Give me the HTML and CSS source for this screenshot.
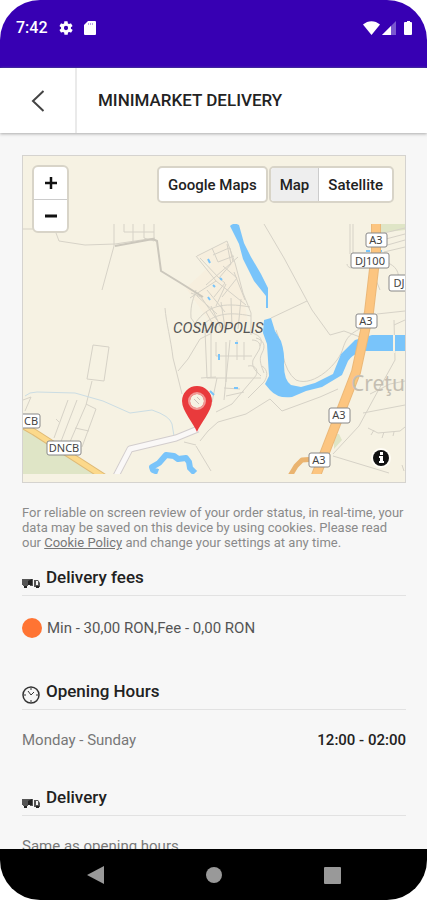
FILE: index.html
```html
<!DOCTYPE html>
<html lang="en">
  <head>
    <meta charset="UTF-8" />
    <meta name="viewport" content="width=device-width, initial-scale=1.0" />
    <title>Minimarket Delivery</title>
    <link rel="stylesheet" href="styles.css">
  </head>
  <body>
    <div class="phone">
      <div class="status">
        <span class="time">7:42</span>
        <svg width="16" height="16" viewBox="0 0 24 24">
          <path fill="#fff" fill-rule="evenodd" d="M19.4 13a7.500 7.500 0 0 0 0-2l2.100-1.600a.5.5 0 0 0 .1-.6l-2-3.500a.5.5 0 0 0-.6-.2l-2.500 1a7.300 7.300 0 0 0-1.700-1L14.400 2.400a.5.5 0 0 0-.5-.4h-4a.5.5 0 0 0-.5.400L9.100 5.100a7.700 7.700 0 0 0-1.700 1L5 5.100a.5.5 0 0 0-.6.2l-2 3.500a.5.5 0 0 0 .1.600L4.600 11a8 8 0 0 0 0 2l-2.100 1.600a.5.5 0 0 0-.1.600l2 3.500c.1.200.4.300.6.200l2.500-1a7.300 7.300 0 0 0 1.700 1l.4 2.700c0 .2.200.4.500.4h4c.3 0 .5-.2.500-.4l.4-2.700a7.700 7.700 0 0 0 1.700-1l2.500 1c.2.100.5 0 .6-.2l2-3.500a.5.500 0 0 0-.1-.6zM12 15.200a3.200 3.200 0 1 1 0-6.400 3.200 3.200 0 0 1 0 6.400z" />
        </svg>
        <svg width="12" height="14" viewBox="0 0 12 14">
          <path fill="#fff" d="M4 0h7a1 1 0 0 1 1 1v12a1 1 0 0 1-1 1H1a1 1 0 0 1-1-1V4z" />
          <path stroke="#b9a5ea" d="M4.500 2v2M6.500 2v2M8.500 2v2" />
        </svg>
        <svg class="signals" width="50" height="14" viewBox="0 0 50 14">
          <path fill="#fff" d="M0 3.500C5-1 12-1 17 3.500L8.500 14z" />
          <path fill="#7a57d0" d="M33 0v14H19z" />
          <path fill="#fff" d="M28 5v9h-9z" />
          <path fill="#fff" d="M42 1h2V0h3v1h1a1 1 0 0 1 1 1v11a1 1 0 0 1-1 1h-6a1 1 0 0 1-1-1V2a1 1 0 0 1 1-1z" />
        </svg>
      </div>

      <header class="topbar">
        <button class="back" type="button" aria-label="Back">
          <svg width="14" height="22" viewBox="0 0 14 22">
            <path fill="none" stroke="#444" stroke-width="2" d="M12.500 1 2 11l10.500 10" />
          </svg>
        </button>
        <h1>MINIMARKET DELIVERY</h1>
      </header>

      <main>
        <section class="map">
          <svg class="tiles" viewBox="23 156 382 326" role="img" aria-label="Delivery area map">
            <rect x="23" y="156" width="382" height="326" fill="#f6f2e3" />
            <svg x="23" y="224" width="382" height="250" viewBox="23 224 382 250">
              <!-- green areas -->
              <path fill="#dfe5c6" d="M23 429 40 436 62 453 100 474H23zM378 224h27v6l-27 3zM334 434l5 0 3 6-8 9z" />
              <!-- built up area -->
              <path fill="#f8ecdb" d="M197 256l30-15 8 22 8 30 5 30-30 10-18-25-14-20 26-24z" opacity=".6" />

              <!-- minor roads -->
              <g fill="none" stroke="#d6d2c7" stroke-width="1">
                <path d="M23 229h13M56 233l3 8 26 4 30-1 40-6" />
                <path d="M114 224v22l-12 44M124 224v8h30M133 224v18M144 224v14l10 3V224M165 308c1 14 6 32 8 50l9 36" />
                <path d="M264 224l20 34 28 52 18 25 14-4 16 6M271 318l36-17M350 224v30M353 224v30" />
                <path d="M93 345l16 2-5 34-17-2zM92 381l-6 24-20 46M68 400l-14 38M77 400l-17 44M86 404l10 5-14 38M75 428l14 3M56 419l3 3M23 400l8-3-6 14" />
                <path d="M196 290c-2 8-6 14-5 28l10 14M196 256l20 25-26 17M191 293l10 4 16 23" />
                <path d="M197 256l30-15 8 22 8 30 8 20v22M200 258l19 20 12-14-4-20M212 248l6 14 16-6M206 285l32-28M216 281l30 24M207 290l18 22M219 278l6 5-11 14M197 296l20 18M223 266l14 12-15 19M230 248l3 14M213 255l16-7" />
                <path d="M196 322c12-16 26-20 54-15M203 325c10-10 24-14 48-9M211 306l10 22M221 302l4 26M231 298l1 30M241 299l-3 30M206 312l9 16M226 284l-10 22M234 272l11 28" />
                <path d="M205 330l2 48M211 331v46M226 342v40M230 340l-6 60M216 356h36M207 378h54M216 342v14M237 340v20M244 342v18M201 378l15-1M178 371l10-12 12-20 12-6" />
                <path d="M252 340c6 0 10 4 7 10l-6 10c-2 8 4 12 8 16M256 338c8 2 10 8 6 15s0 14 2 20M248 332c10 2 16 6 12 14M217 378l-5 24M224 388l16 1M226 396l18-4M262 366c6 4 6 10 2 16l-16 16M248 366c8-2 12 6 6 12l-22 26-16 8" />
                <path d="M196 446l15 25M200 441l8-10 10-9 28-8 24-15 12 12 38-14 18-8M184 442l12 3" />
                <path d="M276 330c6 14 6 40 20 50 18 8 44-18 47-32 4-12 8-16 28-24M394 320l1 40-22 40-14 26-26 28M333 456l56 17M394 325l11-5" />
                <path d="M370 394l20-10 15-3M363 413l42-8M368 428l10 5 22-2 5-4M374 430l-3 5M384 432l-2 6M394 432l-1 4M402 465l2 6" />
                <path d="M380 234l25-6M382 240l23-6M384 246l21-6M384 252l21-5M386 262c10 4 14 10 12 20M376 280l4 10M377 314l28-3M352 268c-3 0-5-2-5-4" />
              </g>
              <path fill="none" stroke="#cbc7bc" stroke-width="2" d="M115 246l38-7 4 2 4 30 18 11 24 15" />

              <!-- water -->
              <path fill="none" stroke="#cbdde4" stroke-width="1" d="M25 396q4-4 12-4l38 1 28 8 27 12 22-3q18 6 20 14l2 12" />
              <path fill="#79c4fa" d="M230 226q4-4 9-1l5 18 7 14 10 17 7 14v20h-2v-12l-12-15-11-22-4-15z" />
              <path fill="#79c4fa" d="M264 320l7-2 4 13 6 10q4 12 3 24 0 15 7 20l10 2 14-4 18-9 8-20 14-14 17-5h33v16h-43q-10 4-14 10l-6 14-20 12-16 4-14 6q-14 2-22-7l-5-6 4-8-2-32-4-11z" />
              <path stroke="#f6f2e3" stroke-width="2" d="M394 335v18" />
              <path fill="none" stroke="#79c4fa" stroke-width="6" stroke-linejoin="round" d="M158 472l-5-2-1-3 7-4 7-8 8 1 4 3 8-1 3 4 1 6 5 5" />
              <path fill="none" stroke="#79c4fa" stroke-width="2" d="M208 259l2 4M220 278l2 2M213 285l2 2M208 297l2 3M219 354v6M235 343h3M234 388h4M269 370h3M210 391l4 4M366 251h4M378 251h4" />

              <!-- main roads -->
              <path fill="none" stroke="#d2cdcd" stroke-width="7" stroke-linejoin="round" d="M116 476l14-27 46-11 22-9" />
              <path fill="none" stroke="#faf8f7" stroke-width="5" stroke-linejoin="round" d="M116 476l14-27 46-11 22-9" />
              <path fill="none" stroke="#dfba76" stroke-width="7" d="M20 424l14 8 70 45" />
              <path fill="none" stroke="#fcd98b" stroke-width="5" d="M20 424l14 8 70 45" />
              <path fill="none" stroke="#eab470" stroke-width="5" stroke-linejoin="round" d="M290 476l6-10 6-6 14-1" />
              <path fill="none" stroke="#ebb878" stroke-width="10" d="M376 220v32l-7 60-13 60-17 44-24 62" />
              <path fill="none" stroke="#fcc580" stroke-width="8" d="M376 220v32l-7 60-13 60-17 44-24 62" />

              <text class="town" x="351" y="391">Creţu</text>
              <text class="district" x="173" y="333">COSMOPOLIS</text>

              <!-- road signs -->
              <g class="sign">
                <rect x="366" y="233" width="21" height="14" rx="2" /><text x="376" y="244">A3</text>
                <rect x="351" y="253" width="38" height="15" rx="2" /><text x="370" y="265">DJ100</text>
                <rect x="389" y="275" width="38" height="16" rx="2" /><text x="399" y="287">DJ</text>
                <rect x="356" y="314" width="21" height="14" rx="2" /><text x="366" y="325">A3</text>
                <rect x="329" y="408" width="21" height="15" rx="2" /><text x="339" y="419">A3</text>
                <rect x="309" y="453" width="21" height="14" rx="2" /><text x="319" y="464">A3</text>
                <rect x="13" y="414" width="27" height="14" rx="2" /><text x="31" y="425">CB</text>
                <rect x="47" y="441" width="34" height="14" rx="2" /><text x="64" y="452">DNCB</text>
              </g>
            </svg>

            <!-- shop pin -->
            <path fill="#e93a3c" fill-rule="evenodd" d="M197 432c-3-8-15-21-15-31a15 15 0 0 1 30 0c0 10-12 23-15 31zM197 394a7 7 0 1 0 0 14 7 7 0 0 0 0-14z" />
            <circle cx="197" cy="401" r="8" fill="none" stroke="#f19a96" stroke-width="2" />
            <path stroke="#c9c0ba" d="M194 399l5 5M197 397l3 3" />

            <circle cx="381" cy="458" r="10" fill="#fffdf6" />
            <circle cx="381" cy="458" r="8" fill="#111" />
            <path fill="#fff" d="M380 452h3v3h-3zM379 456h4v5h1v2h-5v-2h1v-3h-1z" />
          </svg>

          <div class="zoom">
            <button type="button" aria-label="Zoom in">
              <svg width="12" height="12" viewBox="0 0 12 12"><path stroke="#111" stroke-width="2.500" d="M0 6h12M6 0v12" /></svg>
            </button>
            <button type="button" aria-label="Zoom out">
              <svg width="12" height="12" viewBox="0 0 12 12"><path stroke="#111" stroke-width="3" d="M0 6h12" /></svg>
            </button>
          </div>
          <div class="layers">
            <button class="google" type="button">Google Maps</button>
            <div class="switch">
              <button class="active" type="button">Map</button>
              <button type="button">Satellite</button>
            </div>
          </div>
        </section>

        <p class="notice">
          For reliable on screen review of your order status, in real-time, your
          data may be saved on this device by using cookies. Please read
          our&nbsp;<a href="#">Cookie Policy</a> and change your settings at any time.
        </p>

        <section class="info fees">
          <h2>
            <svg width="18" height="18" viewBox="0 0 18 18">
              <path fill="#555" d="M0 7h11v7H0zM12 8h4l2 3v4h-6z" />
              <path fill="#f7f7f7" d="M14 9h2v4h-2zM0 13h1v1H0zM6 14h2v-1H6z" />
              <path fill="#222" d="M2 14h3v2H2zM14 14h3v2h-3zM6 9l4-2v6H6z" />
            </svg>
            Delivery fees
          </h2>
          <p class="fee"><span class="dot"></span>Min - 30,00 RON,Fee - 0,00 RON</p>
        </section>

        <section class="info">
          <h2>
            <svg width="18" height="18" viewBox="0 0 18 18">
              <circle cx="9" cy="9" r="8" fill="none" stroke="#333" stroke-width="1.500" />
              <path fill="none" stroke="#333" d="M6 5l3 4 3-3M9 2v2M9 14v2M2 9h2M14 9h2" />
            </svg>
            Opening Hours
          </h2>
          <p class="row"><span>Monday - Sunday</span><b>12:00 - 02:00</b></p>
        </section>

        <section class="info">
          <h2>
            <svg width="18" height="18" viewBox="0 0 18 18">
              <path fill="#555" d="M0 7h11v7H0zM12 8h4l2 3v4h-6z" />
              <path fill="#f7f7f7" d="M14 9h2v4h-2zM0 13h1v1H0zM6 14h2v-1H6z" />
              <path fill="#222" d="M2 14h3v2H2zM14 14h3v2h-3zM6 9l4-2v6H6z" />
            </svg>
            Delivery
          </h2>
          <p class="row"><span>Same as opening hours</span></p>
        </section>
      </main>

      <nav class="keys">
        <button type="button" aria-label="Back">
          <svg width="18" height="18" viewBox="0 0 18 18"><path fill="#999" d="M17 0v18L0 9z" /></svg>
        </button>
        <button type="button" aria-label="Home">
          <svg width="18" height="18" viewBox="0 0 18 18"><circle cx="9" cy="9" r="8" fill="#999" /></svg>
        </button>
        <button type="button" aria-label="Recent apps">
          <svg width="18" height="18" viewBox="0 0 18 18"><rect x="1" y="1" width="17" height="17" rx="1" fill="#999" /></svg>
        </button>
      </nav>
    </div>
  </body>
</html>
```
FILE: styles.css
```css
* {
  box-sizing: border-box;
}
body {
  margin: 0;
  background-color: #fff;
  font-family: Roboto, sans-serif;
  color: #222;
}
h1,
h2,
p {
  margin: 0;
}
button {
  border: none;
  padding: 0;
  background-color: transparent;
  font-family: inherit;
  color: inherit;
}
svg {
  display: block;
  flex: none;
}
.phone {
  display: flex;
  flex-direction: column;
  height: 100vh;
  border-radius: 40px;
  background-color: #f7f7f7;
  overflow: hidden;
}

.status {
  display: flex;
  align-items: center;
  gap: 10px;
  height: 68px;
  padding: 0 14px 12px 16px;
  background-color: #3700b3;
  border-bottom: 1px solid #2a0a9c;
  flex: none;
}
.time {
  font-size: 16px;
  font-weight: 500;
  color: #fff;
}
.signals {
  margin-left: auto;
}

.topbar {
  display: flex;
  align-items: center;
  height: 65px;
  background-color: #fff;
  box-shadow: 0 1px 3px #aaa;
  flex: none;
}
.back {
  display: flex;
  align-items: center;
  justify-content: center;
  width: 77px;
  height: 100%;
  border-right: 2px solid #eaeaea;
}
h1 {
  padding: 0 0 2px 21px;
  font-size: 17px;
  font-weight: 500;
}

main {
  flex: 1;
  min-height: 0;
  padding: 22px 21px 0 22px;
  overflow: hidden;
}
.map {
  position: relative;
  border: 1px solid #d5d3cf;
}
.tiles {
  width: 100%;
}
.district {
  font-size: 15px;
  font-style: italic;
  fill: #555;
}
.town {
  font-family: "Noto Sans", sans-serif;
  font-size: 21px;
  fill: #c4beb2;
}
.sign rect {
  fill: #fff;
  stroke: #888;
}
.sign text {
  font-family: "Noto Sans", sans-serif;
  font-size: 11px;
  text-anchor: middle;
  fill: #444;
}
.zoom {
  position: absolute;
  top: 9px;
  left: 9px;
  width: 37px;
  border: 2px solid #d8d4c8;
  border-radius: 6px;
  background-color: #fff;
}
.zoom button {
  display: flex;
  align-items: center;
  justify-content: center;
  width: 100%;
  height: 32px;
}
.zoom button + button {
  border-top: 1px solid #ccc;
}
.layers {
  position: absolute;
  top: 10px;
  right: 11px;
  display: flex;
  gap: 1px;
}
.layers button {
  height: 33px;
  padding: 0 9px;
  font-size: 15px;
  font-weight: 500;
}
.layers .google,
.switch {
  box-sizing: content-box;
  border: 2px solid #d8d4c8;
  border-radius: 5px;
  background-color: #fff;
}
.switch {
  display: flex;
  overflow: hidden;
}
.switch .active {
  border-right: 1px solid #ccc;
  background-color: #eee;
}

.notice {
  padding-top: 22px;
  font-size: 13px;
  line-height: 15px;
  color: #8a8a8a;
}
.notice a {
  color: #777;
}

.info h2 {
  display: flex;
  gap: 6px;
  height: 31px;
  border-bottom: 1px solid #e2e2e2;
  font-size: 17px;
  font-weight: 500;
  line-height: 24px;
}
.info h2 svg {
  margin-top: 7px;
}
.info p {
  height: 75px;
  padding-top: 18px;
  font-size: 15px;
  line-height: 24px;
  color: #555;
}
.fees {
  padding-top: 15px;
}
.info .fee {
  display: flex;
  gap: 5px;
  height: 83px;
  padding-top: 20px;
}
.dot {
  width: 20px;
  height: 20px;
  margin-top: 2px;
  border-radius: 50%;
  background-color: #ff7433;
}
.row {
  display: flex;
  justify-content: space-between;
}
.row span {
  color: #777;
}
.row b {
  font-weight: 500;
  color: #222;
}

.keys {
  display: flex;
  align-items: center;
  justify-content: center;
  gap: 100px;
  height: 51px;
  background-color: #000;
  flex: none;
}
```
